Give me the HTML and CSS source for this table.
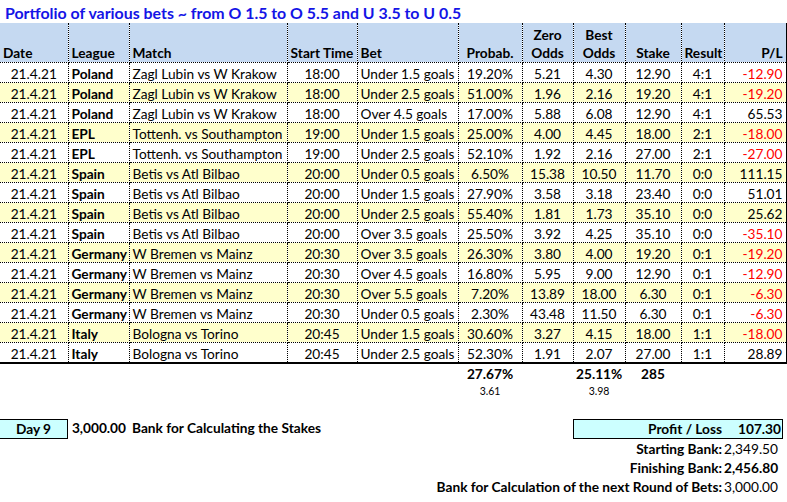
FILE: index.html
```html
<!DOCTYPE html>
<html>
<head>
<meta charset="utf-8">
<link rel="stylesheet" href="styles.css">
</head>
<body>
<div class="sheet">
  <h1 class="title">Portfolio of various bets ~ from O 1.5 to O 5.5 and U 3.5 to U 0.5</h1>
  <table class="bets">
    <colgroup>
      <col style="width:68px"><col style="width:61px"><col style="width:158px"><col style="width:70px"><col style="width:101px"><col style="width:64px"><col style="width:51px"><col style="width:52px"><col style="width:56px"><col style="width:43px"><col style="width:62px">
    </colgroup>
    <thead>
      <tr>
        <th class="l">Date</th><th class="l">League</th><th class="l">Match</th><th class="c">Start Time</th><th class="l">Bet</th><th class="c">Probab.</th><th class="c">Zero<br>Odds</th><th class="c">Best<br>Odds</th><th class="c">Stake</th><th class="c">Result</th><th class="r">P/L</th>
      </tr>
    </thead>
    <tbody>
      <tr><td class="c">21.4.21</td><td class="b">Poland</td><td>Zagl Lubin vs W Krakow</td><td class="c">18:00</td><td>Under 1.5 goals</td><td class="c">19.20%</td><td class="c">5.21</td><td class="c">4.30</td><td class="c">12.90</td><td class="c">4:1</td><td class="r neg">-12.90</td></tr>
      <tr class="alt"><td class="c">21.4.21</td><td class="b">Poland</td><td>Zagl Lubin vs W Krakow</td><td class="c">18:00</td><td>Under 2.5 goals</td><td class="c">51.00%</td><td class="c">1.96</td><td class="c">2.16</td><td class="c">19.20</td><td class="c">4:1</td><td class="r neg">-19.20</td></tr>
      <tr><td class="c">21.4.21</td><td class="b">Poland</td><td>Zagl Lubin vs W Krakow</td><td class="c">18:00</td><td>Over 4.5 goals</td><td class="c">17.00%</td><td class="c">5.88</td><td class="c">6.08</td><td class="c">12.90</td><td class="c">4:1</td><td class="r">65.53</td></tr>
      <tr class="alt"><td class="c">21.4.21</td><td class="b">EPL</td><td>Tottenh. vs Southampton</td><td class="c">19:00</td><td>Under 1.5 goals</td><td class="c">25.00%</td><td class="c">4.00</td><td class="c">4.45</td><td class="c">18.00</td><td class="c">2:1</td><td class="r neg">-18.00</td></tr>
      <tr><td class="c">21.4.21</td><td class="b">EPL</td><td>Tottenh. vs Southampton</td><td class="c">19:00</td><td>Under 2.5 goals</td><td class="c">52.10%</td><td class="c">1.92</td><td class="c">2.16</td><td class="c">27.00</td><td class="c">2:1</td><td class="r neg">-27.00</td></tr>
      <tr class="alt"><td class="c">21.4.21</td><td class="b">Spain</td><td>Betis vs Atl Bilbao</td><td class="c">20:00</td><td>Under 0.5 goals</td><td class="c">6.50%</td><td class="c">15.38</td><td class="c">10.50</td><td class="c">11.70</td><td class="c">0:0</td><td class="r">111.15</td></tr>
      <tr><td class="c">21.4.21</td><td class="b">Spain</td><td>Betis vs Atl Bilbao</td><td class="c">20:00</td><td>Under 1.5 goals</td><td class="c">27.90%</td><td class="c">3.58</td><td class="c">3.18</td><td class="c">23.40</td><td class="c">0:0</td><td class="r">51.01</td></tr>
      <tr class="alt"><td class="c">21.4.21</td><td class="b">Spain</td><td>Betis vs Atl Bilbao</td><td class="c">20:00</td><td>Under 2.5 goals</td><td class="c">55.40%</td><td class="c">1.81</td><td class="c">1.73</td><td class="c">35.10</td><td class="c">0:0</td><td class="r">25.62</td></tr>
      <tr><td class="c">21.4.21</td><td class="b">Spain</td><td>Betis vs Atl Bilbao</td><td class="c">20:00</td><td>Over 3.5 goals</td><td class="c">25.50%</td><td class="c">3.92</td><td class="c">4.25</td><td class="c">35.10</td><td class="c">0:0</td><td class="r neg">-35.10</td></tr>
      <tr class="alt"><td class="c">21.4.21</td><td class="b">Germany</td><td>W Bremen vs Mainz</td><td class="c">20:30</td><td>Over 3.5 goals</td><td class="c">26.30%</td><td class="c">3.80</td><td class="c">4.00</td><td class="c">19.20</td><td class="c">0:1</td><td class="r neg">-19.20</td></tr>
      <tr><td class="c">21.4.21</td><td class="b">Germany</td><td>W Bremen vs Mainz</td><td class="c">20:30</td><td>Over 4.5 goals</td><td class="c">16.80%</td><td class="c">5.95</td><td class="c">9.00</td><td class="c">12.90</td><td class="c">0:1</td><td class="r neg">-12.90</td></tr>
      <tr class="alt"><td class="c">21.4.21</td><td class="b">Germany</td><td>W Bremen vs Mainz</td><td class="c">20:30</td><td>Over 5.5 goals</td><td class="c">7.20%</td><td class="c">13.89</td><td class="c">18.00</td><td class="c">6.30</td><td class="c">0:1</td><td class="r neg">-6.30</td></tr>
      <tr><td class="c">21.4.21</td><td class="b">Germany</td><td>W Bremen vs Mainz</td><td class="c">20:30</td><td>Under 0.5 goals</td><td class="c">2.30%</td><td class="c">43.48</td><td class="c">11.50</td><td class="c">6.30</td><td class="c">0:1</td><td class="r neg">-6.30</td></tr>
      <tr class="alt"><td class="c">21.4.21</td><td class="b">Italy</td><td>Bologna vs Torino</td><td class="c">20:45</td><td>Under 1.5 goals</td><td class="c">30.60%</td><td class="c">3.27</td><td class="c">4.15</td><td class="c">18.00</td><td class="c">1:1</td><td class="r neg">-18.00</td></tr>
      <tr class="last"><td class="c">21.4.21</td><td class="b">Italy</td><td>Bologna vs Torino</td><td class="c">20:45</td><td>Under 2.5 goals</td><td class="c">52.30%</td><td class="c">1.91</td><td class="c">2.07</td><td class="c">27.00</td><td class="c">1:1</td><td class="r">28.89</td></tr>
    </tbody>
  </table>

  <div class="row totals">
    <span class="cell col-prob b">27.67%</span>
    <span class="cell col-best b">25.11%</span>
    <span class="cell col-stake b">285</span>
  </div>
  <div class="row subtotals">
    <span class="cell col-prob">3.61</span>
    <span class="cell col-best">3.98</span>
  </div>

  <div class="row boxes">
    <span class="day b">Day 9</span>
    <span class="cell col-league b r">3,000.00</span>
    <span class="cell col-text b">Bank for Calculating the Stakes</span>
    <span class="pl-box b">
      <span class="pl-label">Profit / Loss</span>
      <span class="pl-value">107.30</span>
    </span>
  </div>
  <div class="row bank">
    <span class="bank-label b">Starting Bank:</span>
    <span class="bank-value">2,349.50</span>
  </div>
  <div class="row bank">
    <span class="bank-label b">Finishing Bank:</span>
    <span class="bank-value b">2,456.80</span>
  </div>
  <div class="row bank">
    <span class="bank-label b">Bank for Calculation of the next Round of Bets:</span>
    <span class="bank-value">3,000.00</span>
  </div>
</div>
</body>
</html>
```
FILE: styles.css
```css
html, body {
  margin: 0;
  padding: 0;
  background: #ffffff;
}
body {
  font-family: Lato, "Liberation Sans", sans-serif;
  font-size: 13.7px;
  color: #000000;
}
.sheet {
  width: 787px;
}
.title {
  margin: 0;
  height: 23px;
  padding-left: 5px;
  font-size: 15.9px;
  line-height: 26px;
  font-weight: bold;
  color: #1414e6;
  white-space: nowrap;
}
.bets {
  border-collapse: collapse;
  table-layout: fixed;
  width: 786px;
}
.bets th {
  background: #c5d9f1;
  height: 39px;
  vertical-align: bottom;
  font-weight: bold;
  line-height: 18px;
  padding: 0 3px 0;
  border-right: 1px dotted #000;
  border-bottom: 1px dotted #000;
  white-space: nowrap;
  overflow: hidden;
}
.bets td {
  height: 17px;
  padding: 2px 3px 0;
  line-height: 17px;
  border-right: 1px dotted #000;
  border-bottom: 1px dotted #000;
  white-space: nowrap;
  overflow: hidden;
  text-overflow: clip;
}
.bets th:last-child,
.bets td:last-child {
  border-right: 1px solid #000;
}
.bets tr.alt td {
  background: #ffffcc;
}
.bets tr.last td {
  border-bottom: 2px solid #000;
}
.l { text-align: left; }
.c { text-align: center; }
.r { text-align: right; }
.b { font-weight: bold; }
.neg { color: #ff0000; }

.row {
  display: grid;
  grid-template-columns: 68px 61px 158px 70px 101px 64px 51px 52px 56px 43px 62px;
  width: 786px;
  white-space: nowrap;
}
.cell {
  padding: 0 3px;
}
.totals {
  height: 20px;
  line-height: 20px;
}
.subtotals {
  height: 16px;
  line-height: 14px;
  font-size: 10.5px;
  margin-bottom: 19px;
}
.col-prob { grid-column: 6; text-align: center; }
.col-best { grid-column: 8; text-align: center; }
.col-stake { grid-column: 9; text-align: center; }
.col-league { grid-column: 2; }
.col-text { grid-column: 3 / 6; }

.boxes {
  height: 20px;
  line-height: 18px;
}
.day {
  grid-column: 1;
  background: #ccffff;
  border: 1px solid #000;
  border-left: none;
  text-align: center;
  height: 18px;
}
.pl-box {
  grid-column: 8 / 12;
  margin-right: 3px;
  background: #ccffff;
  border: 1px solid #000;
  height: 18px;
  display: grid;
  grid-template-columns: 1fr 58px;
}
.pl-label {
  text-align: right;
  padding-right: 2px;
}
.pl-value {
  text-align: right;
  padding-right: 1px;
}
.bank {
  height: 19px;
  line-height: 19px;
}
.bank-label {
  grid-column: 1 / 11;
  text-align: right;
  padding-right: 2px;
}
.bank-value {
  grid-column: 11;
  text-align: right;
  padding-right: 8px;
}
```
